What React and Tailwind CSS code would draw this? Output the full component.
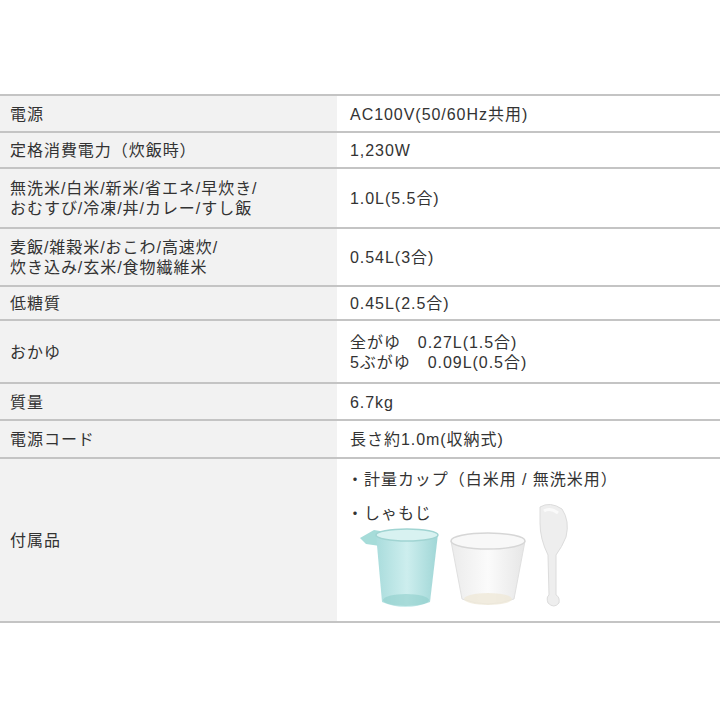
const rows = [
  { label: ["電源"], value: ["AC100V(50/60Hz共用)"], h: "h-[37px]" },
  { label: ["定格消費電力（炊飯時）"], value: ["1,230W"], h: "h-[36px]" },
  { label: ["無洗米/白米/新米/省エネ/早炊き/", "おむすび/冷凍/丼/カレー/すし飯"], value: ["1.0L(5.5合)"], h: "h-[60px]" },
  { label: ["麦飯/雑穀米/おこわ/高速炊/", "炊き込み/玄米/食物繊維米"], value: ["0.54L(3合)"], h: "h-[58px]" },
  { label: ["低糖質"], value: ["0.45L(2.5合)"], h: "h-[34px]" },
  { label: ["おかゆ"], value: ["全がゆ　0.27L(1.5合)", "5ぶがゆ　0.09L(0.5合)"], h: "h-[63px]" },
  { label: ["質量"], value: ["6.7kg"], h: "h-[37px]" },
  { label: ["電源コード"], value: ["長さ約1.0m(収納式)"], h: "h-[38px]" },
];

function Lines({ lines }) {
  return (
    <div className="leading-[20px]">
      {lines.map((l, i) => (
        <div key={i}>{l}</div>
      ))}
    </div>
  );
}

function MeasureCup() {
  return (
    <svg width="80" height="86" viewBox="0 0 80 86">
      <defs>
        <linearGradient id="blue" x1="0" x2="1" y1="0" y2="0">
          <stop offset="0" stopColor="#a9dcdc" />
          <stop offset="0.5" stopColor="#cdeeee" />
          <stop offset="1" stopColor="#9fd6d6" />
        </linearGradient>
      </defs>
      <path d="M0 14 L14 6 L26 8 L20 22 L6 20 Z" fill="#a6dcd9" />
      <path d="M16 10 Q46 2 78 10 L70 78 Q45 88 22 78 Z" fill="url(#blue)" />
      <ellipse cx="47" cy="11" rx="31" ry="6" fill="#d8f2f1" stroke="#a0d4d2" strokeWidth="1.5" />
      <ellipse cx="46" cy="76" rx="23" ry="6" fill="#90cfcc" opacity="0.6" />
    </svg>
  );
}

function RiceCup() {
  return (
    <svg width="78" height="80" viewBox="0 0 78 80">
      <defs>
        <linearGradient id="clear" x1="0" x2="1" y1="0" y2="0">
          <stop offset="0" stopColor="#ebebeb" />
          <stop offset="0.5" stopColor="#fbfbfb" />
          <stop offset="1" stopColor="#e6e6e6" />
        </linearGradient>
      </defs>
      <path d="M2 12 L13 70 Q39 80 65 70 L76 12 Z" fill="url(#clear)" stroke="#e0e0e0" />
      <ellipse cx="39" cy="12" rx="37" ry="8" fill="#f8f8f8" stroke="#d6d6d6" strokeWidth="1.5" />
      <ellipse cx="39" cy="70" rx="24" ry="6" fill="#efe9d8" opacity="0.8" />
    </svg>
  );
}

function Paddle() {
  return (
    <svg width="36" height="108" viewBox="0 0 36 108">
      <path
        d="M4 6 Q14 0 26 8 Q34 20 30 36 Q26 46 20 54 L20 94 Q24 96 23 102 Q18 108 12 102 Q10 96 13 94 L12 54 Q4 38 4 22 Z"
        fill="#eeeeee"
        stroke="#dcdcdc"
        strokeWidth="1"
      />
      <path d="M8 10 Q14 6 22 12" stroke="#fafafa" strokeWidth="3" fill="none" />
    </svg>
  );
}

export default function App() {
  return (
    <div
      className="w-[720px] h-[720px] bg-white text-[#333] text-[16px] tracking-[0.06em]"
      style={{ fontFamily: '"Liberation Sans", "Noto Sans CJK JP", sans-serif' }}
    >
      <div className="pt-[94px]">
        <div className="border-t-2 border-[#c4c4c4]">
          {rows.map((r, i) => (
            <div key={i} className={`flex border-b-2 border-[#c4c4c4] ${r.h}`}>
              <div className="w-[337px] bg-[#f2f2f2] flex items-center pl-[10px] pt-[2px]">
                <Lines lines={r.label} />
              </div>
              <div className="flex-1 flex items-center pl-[13px] pt-[2px]">
                <Lines lines={r.value} />
              </div>
            </div>
          ))}
          <div className="flex border-b-2 border-[#c4c4c4] h-[164px]">
            <div className="w-[337px] bg-[#f2f2f2] flex items-center pl-[10px] pt-[2px]">
              付属品
            </div>
            <div className="flex-1 pl-[10px] pt-[10px] leading-[22px]">
              <div>・計量カップ（白米用 / 無洗米用）</div>
              <div className="mt-[12px]">・しゃもじ</div>
              <div className="flex items-end gap-[9px] -mt-[24px] pl-[13px]">
                <div className="mb-[2px]">
                  <MeasureCup />
                </div>
                <div className="mb-[3px]">
                  <RiceCup />
                </div>
                <div className="mb-[3px]">
                  <Paddle />
                </div>
              </div>
            </div>
          </div>
        </div>
      </div>
    </div>
  );
}
